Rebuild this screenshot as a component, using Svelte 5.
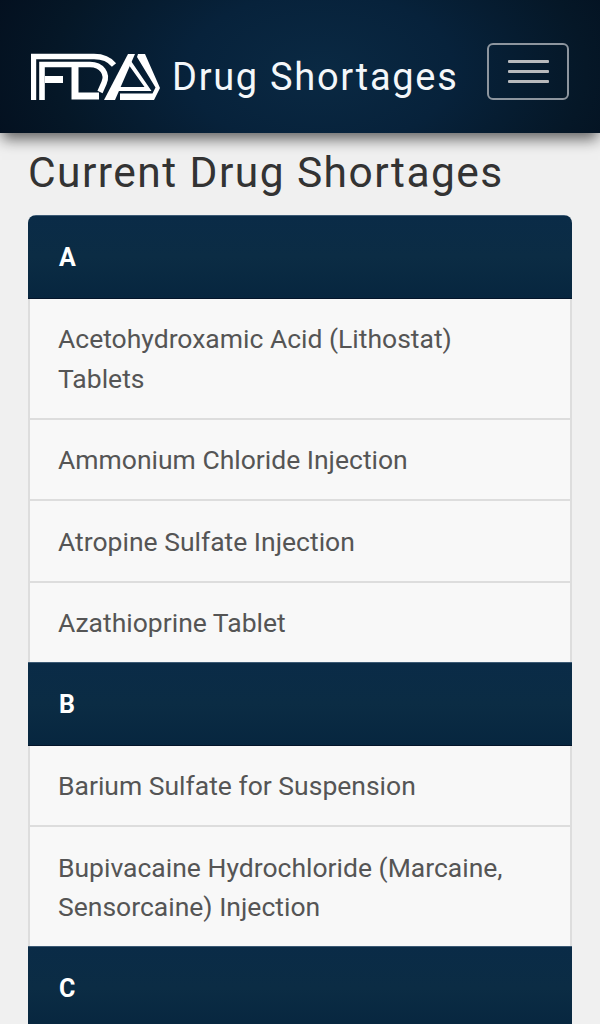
<script lang="ts">
	const groups: { letter: string; drugs: string[] }[] = [
		{
			letter: 'A',
			drugs: [
				'Acetohydroxamic Acid (Lithostat) Tablets',
				'Ammonium Chloride Injection',
				'Atropine Sulfate Injection',
				'Azathioprine Tablet'
			]
		},
		{
			letter: 'B',
			drugs: ['Barium Sulfate for Suspension', 'Bupivacaine Hydrochloride (Marcaine, Sensorcaine) Injection']
		},
		{ letter: 'C', drugs: [] }
	];
</script>

<div class="page">
	<header class="navbar">
		<div class="brand">
			<svg class="logo" viewBox="31 55 129 48" aria-label="FDA">
				<g fill="none" stroke="#fff">
					<path d="M33.500 102V58.500H94C103 58.500 110 62 114 67" stroke-width="5.400" />
					<path d="M42 102V66.500H90C102 66.500 108 76 104 85L100 94" stroke-width="5.600" />
					<path d="M45 81.500H63" stroke-width="7" />
					<path d="M75 69V98H99" stroke-width="7" />
				</g>
				<g fill="#fff">
					<path d="M128 56H135L115 102H104Z" />
					<path d="M138 56H145L160 90L154 102H120V95.500H152.500L155.500 89.500L137 59Z" />
					<path d="M131 63L151.500 93H117L120 89H144.500L129.500 68Z" />
				</g>
			</svg>
			<span class="title">Drug Shortages</span>
		</div>
		<button class="toggle" aria-label="Menu">
			<span></span>
			<span></span>
			<span></span>
		</button>
	</header>

	<main class="content">
		<h1>Current Drug Shortages</h1>
		<div class="list">
			{#each groups as group}
				<div class="divider">{group.letter}</div>
				{#each group.drugs as drug, i}
					<div class="item" class:last={i === group.drugs.length - 1}>{drug}</div>
				{/each}
			{/each}
		</div>
	</main>
</div>

<style>
	:global(body) {
		margin: 0;
		background: #f0f0f0;
	}

	.page {
		height: 1024px;
		overflow: hidden;
		font-family: Roboto, sans-serif;
	}

	.navbar {
		position: relative;
		z-index: 1;
		height: 133px;
		box-sizing: border-box;
		padding: 43px 31px 0 31px;
		display: flex;
		justify-content: space-between;
		align-items: flex-start;
		background: radial-gradient(ellipse 380px 220px at 320px 70px, #0a2943 0%, #07223b 35%, #051727 70%, #030d1c 100%);
		box-shadow: 0 8px 14px -2px rgba(0, 0, 0, 0.6);
	}

	.brand {
		display: flex;
		align-items: center;
		gap: 12px;
		height: 68px;
	}

	.logo {
		width: 129px;
		height: 48px;
		margin-top: -1px;
	}

	.title {
		color: #f4f7fa;
		font-size: 38px;
		letter-spacing: 1.700px;
		white-space: nowrap;
	}

	.toggle {
		width: 82px;
		height: 57px;
		box-sizing: border-box;
		padding: 0;
		border: 2px solid #8d959e;
		border-radius: 6px;
		background: transparent;
		display: flex;
		flex-direction: column;
		align-items: center;
		justify-content: center;
		gap: 7px;
	}

	.toggle span {
		width: 41px;
		height: 3px;
		border-radius: 1px;
		background: #b8babd;
	}

	.content {
		padding: 0 28px;
	}

	h1 {
		margin: 0;
		padding-top: 15px;
		height: 69px;
		box-sizing: border-box;
		color: #333;
		font-size: 42.500px;
		font-weight: 400;
		line-height: 50px;
		letter-spacing: 1.450px;
		white-space: nowrap;
	}

	.list {
		margin-top: 13px;
		border-radius: 8px 8px 0 0;
		overflow: hidden;
	}

	.divider {
		height: 83.500px;
		box-sizing: border-box;
		padding: 2px 31px 0;
		display: flex;
		align-items: center;
		color: #fff;
		font-size: 25px;
		font-weight: 700;
		background: linear-gradient(#0a2b47, #0b2c44 50%, #07263f);
		border-top: 1px solid #3c5a75;
		border-bottom: 1px solid #04152a;
	}

	.item {
		padding: 20.500px 28px 19.500px;
		border: 2px solid #ddd;
		border-top: 0;
		background: #f8f8f8;
		color: #555;
		font-size: 26.500px;
		line-height: 39.500px;
	}

	.item.last {
		border-bottom: 0;
	}
</style>
